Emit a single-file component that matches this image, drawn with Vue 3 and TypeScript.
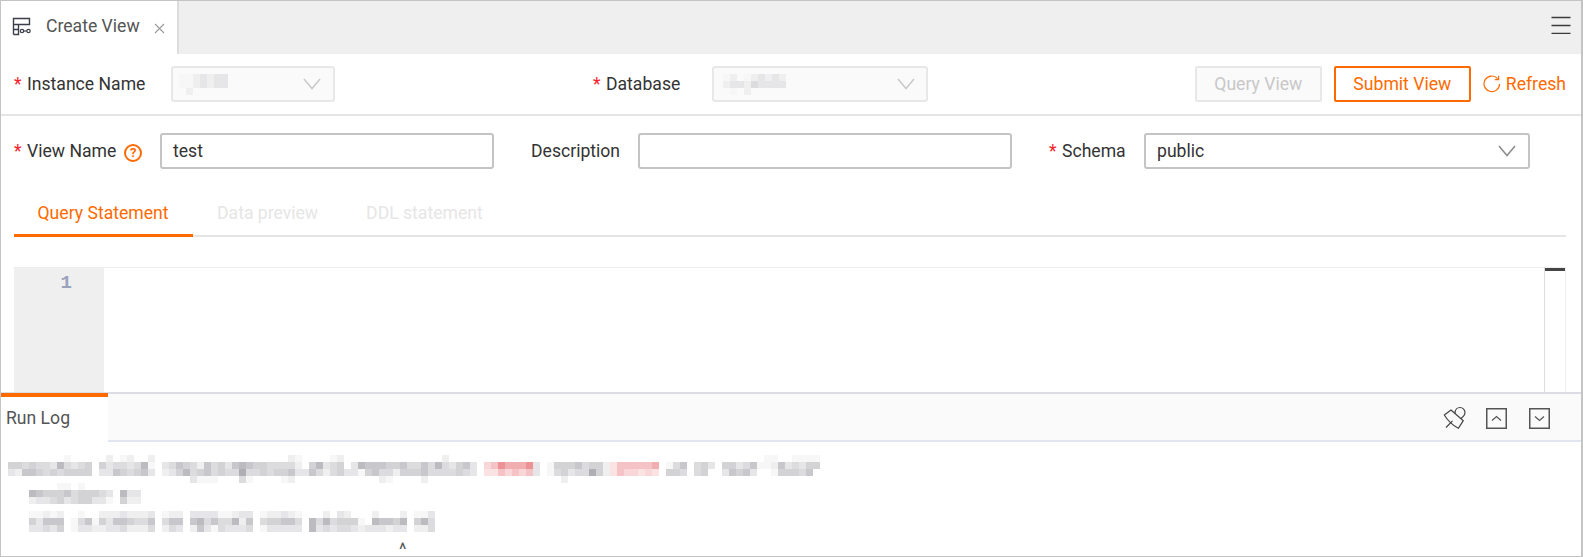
<script setup lang="ts">
import { computed } from 'vue'

type Cell = { x: number; y: number; fill: string }

const palette: Record<string, string> = {
  '1': '#f7f7f7', '2': '#efefef', '3': '#e6e6e8', '4': '#dcdcde',
  '5': '#d3d3d6', '6': '#c8c8cc', '7': '#bcbcc0', '8': '#aeaeb4',
  a: '#fbe3e3', b: '#f9d6d7', c: '#f5c3c5', d: '#f0aeb1', e: '#ec9295'
}

const d = (n: number) => '.'.repeat(n)

const logRows: { y: number; s: string }[] = [
  { y: 0, s: d(8) + '1' + d(5) + '2.12..2' + d(19) + '21....12' + d(14) + '2' + d(45) + '11..1111' },
  { y: 7, s: '554544374345.53443471.34654264536765544442.57345.376665564464743563.bceddde3.155564552acccccd.146.453.55346112634355' },
  { y: 14, s: '326654545555.33654563.235745645448445455633642453315644255564444543.aacbcbc3.145344852acbbaba.554.45..36563..155546' },
  { y: 21, s: d(26) + '3111...41....12' + d(12) + '21....2' + d(19) + '2' },
  { y: 28, s: d(7) + '11.1' },
  { y: 35, s: '...765556455543.733' },
  { y: 42, s: '...233453455331.522' },
  { y: 56, s: '...11212..1..22232223.122.333311233.122321...2.32...2...2.113' },
  { y: 63, s: '...53666.1461' + '53665446.466.674644726.455664.74745551.76657.574' },
  { y: 70, s: '...33435.1332' + '23342224.243.263143334.133333.73434432333233.224' }
]

function toCells(rows: { y: number; s: string }[]): Cell[] {
  const out: Cell[] = []
  for (const row of rows) {
    row.s.split('').forEach((ch, i) => {
      if (palette[ch]) out.push({ x: i * 7, y: row.y, fill: palette[ch] })
    })
  }
  return out
}

const logCells = computed(() => toCells(logRows))
const instanceCells = computed(() =>
  toCells([
    { y: 0, s: '1123233' },
    { y: 7, s: '1123233' },
    { y: 14, s: '.2' }
  ])
)
const databaseCells = computed(() =>
  toCells([
    { y: 0, s: '12.1232' + '32' },
    { y: 7, s: '2332433' + '33' },
    { y: 14, s: '.1.2' }
  ])
)
const editorTabs = ['Data preview', 'DDL statement']
</script>

<template>
  <div class="page">
    <header class="tabbar">
      <div class="doc-tab">
        <svg class="doc-icon" width="20" height="20" viewBox="0 0 20 20" fill="none">
          <path d="M1.5 17.5V1.5H17.5V7.5H1.5M1.5 12.5H6.5M6.5 7.5V17.5H1.5" stroke="#3c3f4a" stroke-width="1.4" />
          <circle cx="10" cy="14" r="1.7" stroke="#3c3f4a" stroke-width="1.2" />
          <circle cx="16.5" cy="14" r="1.7" stroke="#3c3f4a" stroke-width="1.2" />
          <path d="M11.7 14H14.8" stroke="#3c3f4a" stroke-width="1.2" />
        </svg>
        <span class="doc-title">Create View</span>
        <svg class="doc-close" width="11" height="11" viewBox="0 0 11 11" fill="none">
          <path d="M1 1L10 10M10 1L1 10" stroke="#9a9a9a" stroke-width="1.1" />
        </svg>
      </div>
      <svg class="menu-icon" width="20" height="18" viewBox="0 0 20 18" fill="none">
        <path d="M0.5 1.5H19.5M0.5 9.5H19.5M0.5 17.5H19.5" stroke="#3a3a3a" stroke-width="1.6" />
      </svg>
    </header>

    <section class="row top-row">
      <label class="label label-instance"><i>*</i>Instance Name</label>
      <div class="select select-instance disabled">
        <svg class="blur" width="49" height="21" viewBox="0 0 49 21">
          <rect v-for="(c, i) in instanceCells" :key="i" :x="c.x" :y="c.y" width="7" height="7" :fill="c.fill" />
        </svg>
        <svg class="chev" width="18" height="12" viewBox="0 0 18 12" fill="none">
          <path d="M1 1L9 10.5L17 1" stroke="#c9c9c9" stroke-width="1.5" />
        </svg>
      </div>
      <label class="label label-database"><i>*</i>Database</label>
      <div class="select select-database disabled">
        <svg class="blur" width="63" height="21" viewBox="0 0 63 21">
          <rect v-for="(c, i) in databaseCells" :key="i" :x="c.x" :y="c.y" width="7" height="7" :fill="c.fill" />
        </svg>
        <svg class="chev" width="18" height="12" viewBox="0 0 18 12" fill="none">
          <path d="M1 1L9 10.5L17 1" stroke="#c9c9c9" stroke-width="1.5" />
        </svg>
      </div>
      <div class="actions">
        <button class="btn btn-query" type="button">Query View</button>
        <button class="btn btn-submit" type="button">Submit View</button>
        <span class="refresh">
          <svg width="18" height="18" viewBox="0 0 18 18" fill="none">
            <path d="M14.6 3.6A7.8 7.8 0 1 0 16.6 9" stroke="#ff6a00" stroke-width="1.2" />
            <path d="M15.6 0.8V4.6H11.8" stroke="#ff6a00" stroke-width="1.2" />
          </svg>
          Refresh
        </span>
      </div>
    </section>

    <section class="row form-row">
      <label class="label label-view">
        <i>*</i>View Name
        <span class="help">?</span>
      </label>
      <div class="input input-view">test</div>
      <label class="label label-desc">Description</label>
      <div class="input input-desc"></div>
      <label class="label label-schema"><i>*</i>Schema</label>
      <div class="select select-schema">
        <span>public</span>
        <svg class="chev" width="18" height="12" viewBox="0 0 18 12" fill="none">
          <path d="M1 1L9 10.5L17 1" stroke="#8a8a8a" stroke-width="1.5" />
        </svg>
      </div>
    </section>

    <nav class="editor-tabs">
      <span class="editor-tab active">Query Statement</span>
      <span v-for="t in editorTabs" :key="t" class="editor-tab">{{ t }}</span>
    </nav>

    <section class="editor">
      <div class="gutter"><span>1</span></div>
      <div class="code"></div>
      <div class="ruler"></div>
    </section>

    <section class="log">
      <div class="log-bar">
        <div class="log-tab">Run Log</div>
        <div class="log-tools">
          <svg width="24" height="24" viewBox="0 0 24 24" fill="none">
            <path d="M1.3 9L8 4L20.3 14.7L15.3 22.3C10 19.5 5 15 1.3 9Z" stroke="#444" stroke-width="1.2" stroke-linejoin="round" />
            <path d="M12 7.5C12 3.5 14.5 1.5 17 1.5C20 1.5 22 4 22 6.5C22 8.5 20.5 10.5 18 12.5" stroke="#444" stroke-width="1.2" />
            <path d="M3 21.5L9.5 14.8" stroke="#444" stroke-width="1.2" />
          </svg>
          <svg class="tool-up" width="21" height="21" viewBox="0 0 21 21" fill="none">
            <rect x="0.75" y="0.75" width="19.5" height="19.5" stroke="#555" stroke-width="1.5" />
            <path d="M6 12.5L10.5 8.5L15 12.5" stroke="#555" stroke-width="1.2" />
          </svg>
          <svg class="tool-down" width="21" height="21" viewBox="0 0 21 21" fill="none">
            <rect x="0.75" y="0.75" width="19.5" height="19.5" stroke="#555" stroke-width="1.5" />
            <path d="M6 8.5L10.5 12.5L15 8.5" stroke="#555" stroke-width="1.2" />
          </svg>
        </div>
      </div>
      <div class="log-body">
        <svg class="log-lines" width="812" height="77" viewBox="0 0 812 77">
          <rect v-for="(c, i) in logCells" :key="i" :x="c.x" :y="c.y" width="7" height="7" :fill="c.fill" />
        </svg>
        <span class="caret">^</span>
      </div>
    </section>
  </div>
</template>

<style>
html, body { margin: 0; padding: 0; background: #fff; }
</style>

<style scoped>
.page {
  width: 1583px;
  height: 557px;
  box-sizing: border-box;
  border: 1px solid #c4c4c4;
  border-right-width: 2px;
  display: flex;
  flex-direction: column;
  overflow: hidden;
  font-family: Roboto, "Liberation Sans", sans-serif;
  font-size: 17.6px;
  color: #333;
  background: #fff;
}
.tabbar {
  height: 53px;
  flex: none;
  background: #efefef;
  display: flex;
  align-items: flex-start;
  justify-content: space-between;
}
.doc-tab {
  width: 178px;
  height: 53px;
  background: #fff;
  border-right: 2px solid #ddd;
  display: flex;
  align-items: center;
  padding-left: 11px;
  box-sizing: border-box;
}
.doc-icon { margin-top: -1px; }
.doc-title { margin-left: 14px; margin-top: -4px; color: #555; }
.doc-close { margin-left: 14px; margin-top: 2px; }
.menu-icon { margin: 15px 10px 0 0; }
.row { display: flex; align-items: center; flex: none; }
.top-row {
  height: 60px;
  border-bottom: 2px solid #e5e5e5;
  padding-left: 13px;
}
.label { display: block; white-space: nowrap; color: #333; flex: none; }
.label i {
  font-style: normal;
  color: #f5222d;
  margin-right: 7px;
  display: inline-block;
  width: 6px;
}
.label-instance { width: 157px; }
.label-database { width: 119px; margin-left: 258px; }
.select {
  height: 36px;
  box-sizing: border-box;
  border: 2px solid #c4c4c4;
  border-radius: 3px;
  display: flex;
  align-items: center;
  justify-content: space-between;
  padding: 0 12px 0 11px;
  flex: none;
}
.select.disabled { background: #fafafa; border-color: #e8e8e8; }
.select-instance { width: 164px; padding-left: 6px; }
.select-database { width: 216px; padding-left: 9px; padding-right: 11px; }
.select-schema { width: 386px; padding-left: 11px; }
.blur { flex: none; }
.actions { display: flex; align-items: center; margin-left: auto; padding-right: 15px; }
.btn {
  height: 36px;
  box-sizing: border-box;
  background: #fff;
  font: inherit;
  border-radius: 2px;
  padding: 0;
}
.btn-query { width: 127px; background: #fafafa; border: 2px solid #e8e8e8; color: #c8c8c8; }
.btn-submit { width: 137px; margin-left: 12px; border: 2px solid #ff6a00; color: #ff6a00; }
.refresh { display: flex; align-items: center; gap: 5px; margin-left: 12px; color: #ff6a00; }
.form-row { padding: 17px 0 0 13px; height: 36px; }
.label-view { width: 146px; display: flex; align-items: center; }
.help {
  width: 18px;
  height: 18px;
  box-sizing: border-box;
  border: 2px solid #ff6a00;
  border-radius: 50%;
  margin: 4px 0 0 8px;
  color: #ff6a00;
  font-size: 13px;
  font-weight: 700;
  line-height: 14px;
  text-align: center;
}
.input {
  height: 36px;
  box-sizing: border-box;
  border: 2px solid #c4c4c4;
  border-radius: 3px;
  padding: 0 11px;
  line-height: 32px;
  flex: none;
}
.input-view { width: 334px; }
.label-desc { width: 107px; margin-left: 37px; }
.input-desc { width: 374px; }
.label-schema { width: 95px; margin-left: 37px; }
.editor-tabs {
  flex: none;
  margin: 21px 15px 0 13px;
  height: 47px;
  box-sizing: border-box;
  border-bottom: 2px solid #e5e5e5;
  display: flex;
}
.editor-tab {
  padding: 0 24px;
  line-height: 46px;
  height: 47px;
  box-sizing: border-box;
  color: #e6e6e6;
  white-space: nowrap;
}
.editor-tab.active { color: #ff6a00; border-bottom: 3px solid #ff6a00; padding: 0 24.5px 0 23.5px; }
.editor {
  flex: none;
  height: 125px;
  margin: 30px 15px 0 13px;
  border-top: 1px solid #eee;
  box-sizing: border-box;
  display: flex;
}
.gutter {
  width: 90px;
  background: #efefef;
  text-align: right;
  padding-right: 32px;
  box-sizing: border-box;
  font-family: "Liberation Mono", monospace;
  font-weight: 700;
  font-size: 19px;
  line-height: 30px;
  color: #9aa3bd;
}
.code { flex: 1; }
.ruler {
  width: 22px;
  box-sizing: border-box;
  border-left: 1px solid #ddd;
  border-right: 1px solid #eee;
  margin-top: -1px;
  position: relative;
}
.ruler::before {
  content: "";
  position: absolute;
  left: 0;
  right: 0;
  top: 1px;
  height: 3px;
  background: #444;
}
.log { flex: 1; display: flex; flex-direction: column; min-height: 0; }
.log-bar {
  height: 50px;
  flex: none;
  box-sizing: border-box;
  background: #fafafa;
  border-top: 2px solid #dcdce4;
  border-bottom: 2px solid #e2e6f0;
  display: flex;
  justify-content: space-between;
  align-items: center;
}
.log-tab {
  width: 107px;
  height: 49px;
  margin-top: -1px;
  margin-bottom: -2px;
  align-self: flex-start;
  background: #fff;
  border-top: 4px solid #ff6a00;
  box-sizing: border-box;
  padding: 0 0 0 5px;
  line-height: 42px;
  color: #555;
}
.log-tools { display: flex; align-items: center; padding: 2px 31px 0 0; }
.tool-up { margin-left: 19px; }
.tool-down { margin-left: 22px; }
.log-body { flex: 1; position: relative; }
.log-lines { display: block; margin: 13px 0 0 7px; }
.caret {
  position: absolute;
  display: block;
  left: 398px;
  top: 103px;
  height: 10px;
  color: #555;
  font-size: 17.6px;
  line-height: 10px;
}
</style>
